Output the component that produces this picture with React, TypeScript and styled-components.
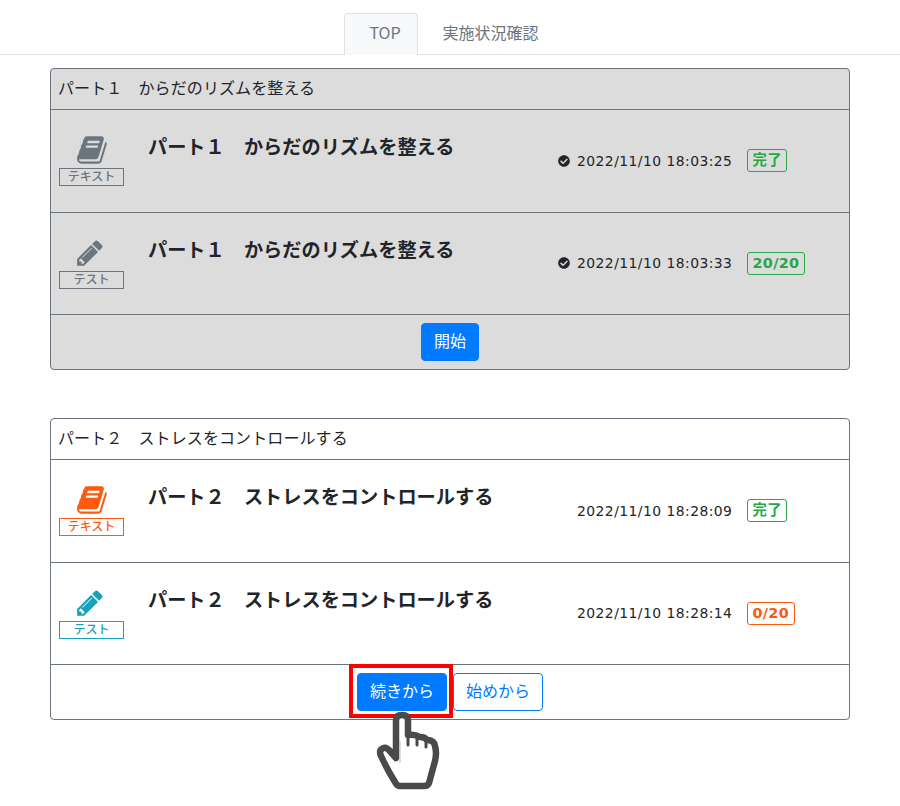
import React from "react";
import styled, { createGlobalStyle } from "styled-components";
import { FaCheckCircle } from "react-icons/fa";

const GlobalStyle = createGlobalStyle`
  html, body {
    margin: 0;
    padding: 0;
    background: #fff;
  }
  body {
    color: #212529;
    font-family: "DejaVu Sans", "Noto Sans CJK JP", sans-serif;
    font-size: 16px;
  }
  #root {
    min-height: 100vh;
  }
  * {
    box-sizing: border-box;
  }
`;

const TabBar = styled.ul`
  display: flex;
  justify-content: center;
  height: 55px;
  margin: 0 0 13px;
  padding: 13px 0 0;
  list-style: none;
  border-bottom: 1px solid #dee2e6;
`;

const Tab = styled.li<{ $active?: boolean }>`
  height: 42px;
  padding: 0 16px 0 24px;
  line-height: 37px;
  font-size: 16px;
  font-family: "Noto Sans CJK JP", sans-serif;
  color: #6c757d;
  border: 1px solid ${(p) => (p.$active ? "#dee2e6" : "transparent")};
  border-bottom: 0;
  border-radius: 4px 4px 0 0;
  background: ${(p) => (p.$active ? "#f8f9fa" : "transparent")};
`;

const Page = styled.main`
  display: flex;
  flex-direction: column;
  gap: 48px;
  padding: 0 50px;
`;

const Card = styled.section<{ $done?: boolean }>`
  border: 1px solid #6c757d;
  border-radius: 4px;
  background: ${(p) => (p.$done ? "#dcdcdc" : "#fff")};
`;

const CardHeader = styled.header`
  height: 41px;
  padding: 0 7px;
  line-height: 36px;
  font-family: "Noto Sans CJK JP", sans-serif;
  font-size: 16px;
  letter-spacing: 0.1px;
  border-bottom: 1px solid #6c757d;
`;

const Row = styled.div`
  display: flex;
  height: 102.5px;
  border-bottom: 1px solid #6c757d;
`;

const Kind = styled.div<{ $color: string }>`
  display: flex;
  flex-direction: column;
  align-items: center;
  gap: 2px;
  flex: none;
  width: 65px;
  margin: 24px 0 0 8px;
  color: ${(p) => p.$color};
`;

const BookGlyph = styled.svg`
  display: block;
  width: 32px;
  height: 32px;
  margin-left: 3px;
`;

const PencilGlyph = styled.svg`
  display: block;
  width: 30px;
  height: 30px;
  margin: 1px 4px 1px 0;
`;

const KindLabel = styled.span<{ $color: string }>`
  display: block;
  width: 65px;
  height: 18px;
  border: 1px solid ${(p) => p.$color};
  font-family: "Noto Sans CJK JP", sans-serif;
  font-size: 12px;
  font-weight: 500;
  line-height: 14px;
  text-align: center;
`;

const Title = styled.h3`
  flex: none;
  width: 410px;
  margin: 21px 0 0 24px;
  font-family: "Noto Sans CJK JP", sans-serif;
  font-size: 19.2px;
  font-weight: 700;
  line-height: 30px;
`;

const Stamp = styled.div`
  display: flex;
  align-items: center;
  flex: none;
  width: 189px;
  height: 23px;
  margin-top: 39px;
  font-size: 13.9px;
  letter-spacing: 0.45px;
  white-space: nowrap;

  svg {
    flex: none;
    width: 12px;
    height: 12px;
    margin-right: 7px;
  }
`;

const StampText = styled.span<{ $indent?: boolean }>`
  margin-left: ${(p) => (p.$indent ? "19px" : "0")};
`;

const Badge = styled.span<{ $color: string }>`
  align-self: flex-start;
  height: 23px;
  margin-top: 39px;
  padding: 0 4.5px;
  border: 1px solid ${(p) => p.$color};
  border-radius: 3px;
  color: ${(p) => p.$color};
  font-size: 14.4px;
  font-weight: 700;
  letter-spacing: 0.3px;
  line-height: 21px;
  white-space: nowrap;
`;

const Actions = styled.footer`
  display: flex;
  justify-content: center;
  gap: 6px;
  padding: 8px;
`;

const Button = styled.button<{ $outline?: boolean }>`
  display: block;
  height: 38px;
  padding: 0 12px 4px;
  border: 1px solid #007bff;
  border-radius: 4px;
  background: ${(p) => (p.$outline ? "#fff" : "#007bff")};
  color: ${(p) => (p.$outline ? "#007bff" : "#fff")};
  font-family: "Noto Sans CJK JP", sans-serif;
  font-size: 16px;
`;

const Spot = styled.div`
  position: relative;
`;

const SpotFrame = styled.div`
  position: absolute;
  top: -9px;
  left: -8px;
  right: -6px;
  bottom: -7px;
  border: 4px solid #f00;
  pointer-events: none;
`;

const HandMark = styled.svg`
  position: absolute;
  top: 38px;
  left: 19px;
  width: 66px;
  height: 80px;
`;

const BookIcon = () => (
  <BookGlyph viewBox="0 0 1792 1792" fill="currentColor">
    <path d="M1639 478q40 57 18 129l-275 906q-19 64-76.500 107.500t-122.500 43.500h-923q-77 0-148.500-53.500t-99.500-131.500q-24-67-2-127 0-4 3-27t4-37q1-8-3-21.500t-3-19.500q2-11 8-21t16.500-23.500 16.500-23.500q23-38 45-91.500t30-91.500q3-10 .5-30t-.5-28q3-11 17-28t17-23q21-36 42-92t25-90q1-9-2.500-32t.5-28q4-13 22-30.500t22-22.500q19-26 42.500-84.500t27.500-96.500q1-8-3-25.500t-2-26.500q2-8 9-18t18-23 17-21q8-12 16.500-30.500t15-35 16-36 19.500-32 26.500-23.500 36-11.500 47.500 5.500l-1 3q38-9 51-9h761q74 0 114 56t18 130l-274 906q-36 119-71.500 153.500t-128.500 34.500h-869q-27 0-38 15-11 16-1 43 24 70 144 70h923q29 0 56-15.500t35-41.500l300-987q7-22 5-57 38 15 59 43zm-1064 2q-4 13 2 22.500t20 9.500h608q13 0 25.500-9.500t16.500-22.500l21-64q4-13-2-22.500t-20-9.500h-608q-13 0-25.500 9.500t-16.500 22.500zm-83 256q-4 13 2 22.500t20 9.500h608q13 0 25.500-9.500t16.500-22.500l21-64q4-13-2-22.500t-20-9.500h-608q-13 0-25.500 9.500t-16.500 22.500z" />
  </BookGlyph>
);

const PencilIcon = () => (
  <PencilGlyph viewBox="0 0 1792 1792" fill="currentColor">
    <path d="M491 1536l91-91-235-235-91 91v107h128v128h107zm523-928q0-22-22-22-10 0-17 7l-542 542q-7 7-7 17 0 22 22 22 10 0 17-7l542-542q7-7 7-17zm-54-192l416 416-832 832h-416v-416zm683 96q0 53-37 90l-166 166-416-416 166-165q36-38 90-38 53 0 91 38l235 234q37 39 37 91z" />
  </PencilGlyph>
);

const Hand = () => (
  <HandMark viewBox="0 0 66 80">
    <path
      d="M20 47 L20 9 Q20 4 26 4 Q32 4 32 9 L32 24 Q39 23 44 26 Q49 26 51 29 Q58 29 59 35 Q61 42 59 50 L53 72 Q52 75 48 75 L24 75 Q21 75 19 71 Q12 60 6 47 Q2 40 6 38 Q9 35 13 39 Z"
      fill="#fff"
      stroke="#4a4a4a"
      strokeWidth="6.500"
      strokeLinejoin="round"
    />
    <g fill="none" stroke="#4a4a4a" strokeWidth="3" strokeLinecap="round">
      <path d="M32 26 V34" />
      <path d="M41 27 V34" />
      <path d="M50 30 V36" />
    </g>
    <path d="M24 30 V52" stroke="#bbb" strokeWidth="1" />
  </HandMark>
);

type Item = {
  kind: "text" | "test";
  title: string;
  date: string;
  checked?: boolean;
  score: string;
  scoreColor: string;
};

const GRAY = "#6c757d";
const ORANGE = "#fd5a0d";
const TEAL = "#17a2b8";
const GREEN = "#28a745";

const part1: Item[] = [
  { kind: "text", title: "パート１　からだのリズムを整える", date: "2022/11/10 18:03:25", checked: true, score: "完了", scoreColor: GREEN },
  { kind: "test", title: "パート１　からだのリズムを整える", date: "2022/11/10 18:03:33", checked: true, score: "20/20", scoreColor: GREEN },
];

const part2: Item[] = [
  { kind: "text", title: "パート２　ストレスをコントロールする", date: "2022/11/10 18:28:09", score: "完了", scoreColor: GREEN },
  { kind: "test", title: "パート２　ストレスをコントロールする", date: "2022/11/10 18:28:14", score: "0/20", scoreColor: ORANGE },
];

const LessonRow = ({ item, done }: { item: Item; done?: boolean }) => {
  const color = done ? GRAY : item.kind === "text" ? ORANGE : TEAL;
  return (
    <Row>
      <Kind $color={color}>
        {item.kind === "text" ? <BookIcon /> : <PencilIcon />}
        <KindLabel $color={color}>{item.kind === "text" ? "テキスト" : "テスト"}</KindLabel>
      </Kind>
      <Title>{item.title}</Title>
      <Stamp>
        {item.checked && <FaCheckCircle />}
        <StampText $indent={!item.checked}>{item.date}</StampText>
      </Stamp>
      <Badge $color={item.scoreColor}>{item.score}</Badge>
    </Row>
  );
};

export default function App() {
  return (
    <>
      <GlobalStyle />
      <TabBar>
        <Tab $active>TOP</Tab>
        <Tab>実施状況確認</Tab>
      </TabBar>
      <Page>
        <Card $done>
          <CardHeader>パート１　からだのリズムを整える</CardHeader>
          {part1.map((item) => (
            <LessonRow key={item.date} item={item} done />
          ))}
          <Actions>
            <Button>開始</Button>
          </Actions>
        </Card>
        <Card>
          <CardHeader>パート２　ストレスをコントロールする</CardHeader>
          {part2.map((item) => (
            <LessonRow key={item.date} item={item} />
          ))}
          <Actions>
            <Spot>
              <Button>続きから</Button>
              <SpotFrame />
              <Hand />
            </Spot>
            <Button $outline>始めから</Button>
          </Actions>
        </Card>
      </Page>
    </>
  );
}
